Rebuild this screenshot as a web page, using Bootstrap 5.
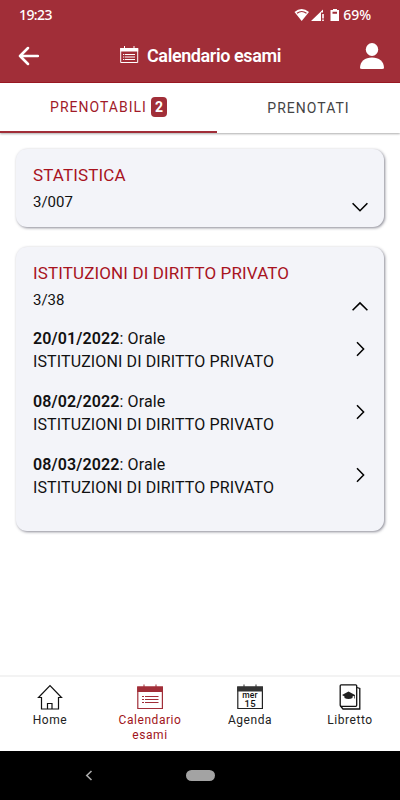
<!DOCTYPE html>
<html lang="it">
<head>
<meta charset="utf-8">
<meta name="viewport" content="width=device-width, initial-scale=1">
<title>Calendario esami</title>
<link href="https://cdn.jsdelivr.net/npm/bootstrap@5.3.0/dist/css/bootstrap.min.css" rel="stylesheet">
<style>
body{font-family:Roboto,"Liberation Sans",sans-serif;color:#111;background:#fff;width:400px;height:800px;overflow:hidden}
svg{display:block;flex:none}
.top-area{background:#a12e38;color:#fff;height:83px;border-bottom:1px solid #9c1823}
.status-bar{height:30px;padding:0 29px 0 19px;line-height:28px}
.status-bar span{font-family:"Noto Sans",sans-serif;font-weight:500}
.status-bar .clock{font-size:14px;letter-spacing:-.6px}
.status-bar .level{font-size:14px;letter-spacing:-.1px;margin-left:-2px}
.title-bar{height:52px;padding:0 16px 0 18px}
.title-bar h1{font-size:18px;font-weight:600;letter-spacing:-.4px;line-height:24px}
.title-group{margin-left:2px}
.tab-strip{height:50px;box-shadow:0 1px 2px rgba(0,0,0,.32);position:relative;z-index:1}
.tab-strip .nav-link{height:50px;font-size:14px;font-weight:400;letter-spacing:1.02px;color:#444;border-radius:0;padding:0}
.tab-strip .tab-a{width:217px;color:#a11a28;border-bottom:2px solid #a12e38}
.tab-strip .tab-b{width:183px}
.count{width:16px;height:20px;border-radius:4px;background:#a12e38;font-size:14px;font-weight:700;letter-spacing:0;padding:0;line-height:20px}
.exam{background:#f3f4f9;border:0;border-radius:11px;box-shadow:1px 1px 3px rgba(40,40,60,.55);margin:0 16px 20px;padding:15px 16px 0 17px}
.exam h2{font-size:17px;line-height:22px;font-weight:400;letter-spacing:.13px;color:#a8131e;margin:0}
.exam .code{font-size:15px;line-height:22px;margin-top:5px}
.exam .toggle{margin-top:38px}
.stat{height:78px}
.law{height:284px}
.law .toggle{margin-top:39px}
.sessions{margin-top:16px}
.session{font-size:16px;letter-spacing:.12px;line-height:23px;height:63px}
.session b{font-weight:600}
.session .go{margin:14px 3px 0 0}
.bottom-nav{height:76px;border-top:2px solid #f3f3f3;background:#fff}
.bottom-nav .nav-link{width:100px;padding:7px 0 0;color:#222;font-size:12px;line-height:14.500px;letter-spacing:.55px}
.bottom-nav .nav-link.active{color:#a11420}
.bottom-nav .lbl{margin-top:2px}
.system-bar{height:49px;background:#000}
.home-pill{width:29px;height:11px;background:#a3a3a3;border-radius:6px}
.side{width:101px}
</style>
</head>
<body class="d-flex flex-column">
<header class="top-area flex-shrink-0">
  <div class="status-bar d-flex align-items-center justify-content-between">
    <span class="clock">19:23</span>
    <div class="d-flex align-items-center">
      <svg width="51" height="14" viewBox="0 0 51 14" fill="#fff"><path d="M.5 4Q7.500-2 15 4L7.700 13Z"/><path d="M3 5.200Q7.700 1.800 12.500 5.200" fill="none" stroke="#a12e38" stroke-width="1.200"/><path d="M17 13 29 1.500V4.500H27V13ZM28.200 6h1.600v4.500h-1.600zM28.200 11.500h1.600V13h-1.600z"/><path fill-rule="evenodd" d="M39 1h4v1h2v11h-8.500V2H39zM38.500 3.800v2h4.500v-2z"/></svg>
      <span class="level">69%</span>
    </div>
  </div>
  <div class="title-bar d-flex align-items-center justify-content-between">
    <svg width="21" height="20" viewBox="0 0 21 20" fill="none" stroke="#fff" stroke-width="2.500" stroke-linecap="round" stroke-linejoin="round"><path d="M10 2 2 10l8 8M2 10h18"/></svg>
    <div class="title-group d-flex align-items-center">
      <svg class="me-2" width="19" height="20" viewBox="0 0 19 20" fill="none" stroke="#fff"><path d="M.7 2.500h17v14H.7z"/><path fill="#fff" stroke="none" d="M.2 2h18v3.500H.2zM4 0h1v2H4zM13.500 0h1v2h-1z"/><path d="M3 8.500h1.300M5 8.500h10M3 11h1.300M5 11h10M3 13.500h1.300M5 13.500h10"/></svg>
      <h1 class="m-0">Calendario esami</h1>
    </div>
    <svg width="24" height="26" viewBox="0 0 24 26" fill="#fff"><ellipse cx="12" cy="6.500" rx="6.200" ry="6.500"/><path d="M0 25C0 18.500 5 14.500 12 14.500S24 18.500 24 25Q24 26 22 26H2Q0 26 0 25Z"/></svg>
  </div>
</header>
<nav class="tab-strip nav flex-shrink-0 bg-white">
  <a class="nav-link tab-a d-flex align-items-center justify-content-center" href="#">PRENOTABILI<span class="badge count ms-1">2</span></a>
  <a class="nav-link tab-b d-flex align-items-center justify-content-center" href="#">PRENOTATI</a>
</nav>
<main class="flex-grow-1 pt-3 overflow-hidden">
  <section class="card exam stat">
    <div class="d-flex justify-content-between">
      <div><h2>STATISTICA</h2><div class="code">3/007</div></div>
      <svg class="toggle" width="16" height="10" viewBox="0 0 16 10" fill="none" stroke="#000" stroke-width="1.600"><path d="M.6 1.300 8 8.700 15.400 1.300"/></svg>
    </div>
  </section>
  <section class="card exam law">
    <div class="d-flex justify-content-between">
      <div><h2>ISTITUZIONI DI DIRITTO PRIVATO</h2><div class="code">3/38</div></div>
      <svg class="toggle" width="16" height="10" viewBox="0 0 16 10" fill="none" stroke="#000" stroke-width="1.600"><path d="M.6 9.300 8 1.900 15.400 9.300"/></svg>
    </div>
    <div class="sessions">
      <div class="session d-flex justify-content-between"><div><b>20/01/2022</b>: Orale<br>ISTITUZIONI DI DIRITTO PRIVATO</div><svg class="go" width="9" height="16" viewBox="0 0 9 16" fill="none" stroke="#000" stroke-width="1.500"><path d="M1 1.200 7.600 8 1 14.800"/></svg></div>
      <div class="session d-flex justify-content-between"><div><b>08/02/2022</b>: Orale<br>ISTITUZIONI DI DIRITTO PRIVATO</div><svg class="go" width="9" height="16" viewBox="0 0 9 16" fill="none" stroke="#000" stroke-width="1.500"><path d="M1 1.200 7.600 8 1 14.800"/></svg></div>
      <div class="session d-flex justify-content-between"><div><b>08/03/2022</b>: Orale<br>ISTITUZIONI DI DIRITTO PRIVATO</div><svg class="go" width="9" height="16" viewBox="0 0 9 16" fill="none" stroke="#000" stroke-width="1.500"><path d="M1 1.200 7.600 8 1 14.800"/></svg></div>
    </div>
  </section>
</main>
<nav class="bottom-nav nav flex-nowrap flex-shrink-0">
  <a class="nav-link d-flex flex-column align-items-center text-center" href="#">
    <svg width="26" height="27" viewBox="0 0 26 27" fill="none" stroke="#111" stroke-width="1.200"><path d="M4.500 13.500H1.500L13 1.500 24.500 13.500h-3V25h-17zM10.500 25V19.500h4.500V25"/></svg>
    <span class="lbl">Home</span></a>
  <a class="nav-link active d-flex flex-column align-items-center text-center" href="#">
    <svg width="26" height="27" viewBox="0 0 26 27" fill="none" stroke="#a12e38" stroke-width="1.200"><path d="M.8 3h24.600v21.500H.8z"/><path fill="#a12e38" stroke="none" d="M.2 2.400h25.700V8H.2zM6.500.4h1v2h-1zM18.500.4h1v2h-1z"/><path d="M5 12.500h2M8 12.500h13.500M5 15.500h2M8 15.500h13.500M5 18.500h2M8 18.500h13.500"/></svg>
    <span class="lbl">Calendario<br>esami</span></a>
  <a class="nav-link d-flex flex-column align-items-center text-center" href="#">
    <svg width="26" height="27" viewBox="0 0 26 27" fill="none" stroke="#222" stroke-width="1.200"><path d="M.8 3h24.600v21.500H.8z"/><path fill="#333" stroke="none" d="M.2 2.400h25.700V7.500H.2zM6.500.4h1v2h-1zM18.500.4h1v2h-1z"/><g fill="#111" stroke="none" text-anchor="middle" font-family="Roboto,sans-serif" font-weight="500"><text x="13" y="13.500" font-size="8.500" letter-spacing=".1">mer</text><text x="13.200" y="23" font-size="9.500" letter-spacing=".2">15</text></g></svg>
    <span class="lbl">Agenda</span></a>
  <a class="nav-link d-flex flex-column align-items-center text-center" href="#">
    <svg width="22" height="27" viewBox="0 0 22 27" fill="none" stroke="#111" stroke-width="1.300"><rect x="1.200" y=".8" width="16.500" height="21.500" rx="1"/><path d="M1.500 22 4 25H20.800V4.500L18 3.500"/><path fill="#222" stroke="none" d="M3 11 9.500 7.500 16 11V14.500H15.300V11.800L13.500 12.600V14Q9.500 16 5.500 14V12.400Z"/></svg>
    <span class="lbl">Libretto</span></a>
</nav>
<footer class="system-bar d-flex flex-shrink-0 align-items-center justify-content-center">
  <div class="side"><svg width="8" height="11" viewBox="0 0 8 11" fill="none" stroke="#aaa" stroke-width="1.600"><path d="M6.500 1 1.800 5.500 6.500 10"/></svg></div>
  <div class="home-pill"></div>
  <div class="side"></div>
</footer>
<script src="https://cdn.jsdelivr.net/npm/bootstrap@5.3.0/dist/js/bootstrap.bundle.min.js"></script>
</body>
</html>
